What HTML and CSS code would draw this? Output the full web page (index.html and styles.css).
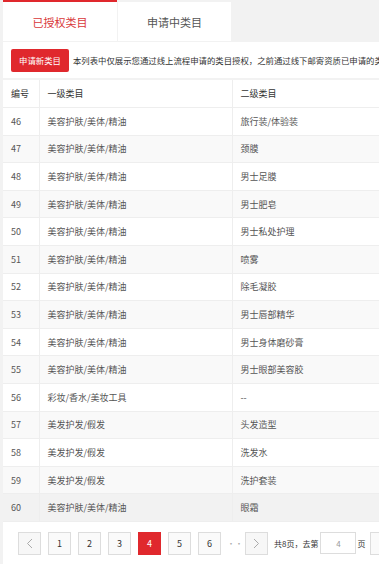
FILE: index.html
```html
<!DOCTYPE html>
<html lang="zh-CN">

<head>
  <meta charset="UTF-8">
  <meta name="viewport" content="width=device-width, initial-scale=1.0">
  <title>类目授权</title>
  <link rel="stylesheet" href="styles.css">
</head>

<body>
  <div class="page">
    <div class="tabs">
      <div class="tab active">已授权类目</div>
      <div class="tab">申请中类目</div>
    </div>

    <div class="notice">
      <button class="apply-btn">申请新类目</button>
      <span class="notice-text">本列表中仅展示您通过线上流程申请的类目授权，之前通过线下邮寄资质已申请的类目请联系客服查询</span>
    </div>

    <table class="cat-table">
      <thead>
        <tr>
          <th class="col-no">编号</th>
          <th class="col-first">一级类目</th>
          <th>二级类目</th>
        </tr>
      </thead>
      <tbody>
        <tr><td>46</td><td>美容护肤/美体/精油</td><td>旅行装/体验装</td></tr>
        <tr><td>47</td><td>美容护肤/美体/精油</td><td>颈膜</td></tr>
        <tr><td>48</td><td>美容护肤/美体/精油</td><td>男士足膜</td></tr>
        <tr><td>49</td><td>美容护肤/美体/精油</td><td>男士肥皂</td></tr>
        <tr><td>50</td><td>美容护肤/美体/精油</td><td>男士私处护理</td></tr>
        <tr><td>51</td><td>美容护肤/美体/精油</td><td>喷雾</td></tr>
        <tr><td>52</td><td>美容护肤/美体/精油</td><td>除毛凝胶</td></tr>
        <tr><td>53</td><td>美容护肤/美体/精油</td><td>男士唇部精华</td></tr>
        <tr><td>54</td><td>美容护肤/美体/精油</td><td>男士身体磨砂膏</td></tr>
        <tr><td>55</td><td>美容护肤/美体/精油</td><td>男士眼部美容胶</td></tr>
        <tr><td>56</td><td>彩妆/香水/美妆工具</td><td>--</td></tr>
        <tr><td>57</td><td>美发护发/假发</td><td>头发造型</td></tr>
        <tr><td>58</td><td>美发护发/假发</td><td>洗发水</td></tr>
        <tr><td>59</td><td>美发护发/假发</td><td>洗护套装</td></tr>
        <tr class="hover"><td>60</td><td>美容护肤/美体/精油</td><td>眼霜</td></tr>
      </tbody>
    </table>

    <div class="pager">
      <a class="pg arrow">
        <svg width="7" height="11" viewBox="0 0 7 11"><path d="M6 1L1.5 5.5L6 10" fill="none" stroke="#aaa" stroke-width="1"/></svg>
      </a>
      <a class="pg">1</a>
      <a class="pg">2</a>
      <a class="pg">3</a>
      <a class="pg current">4</a>
      <a class="pg">5</a>
      <a class="pg">6</a>
      <span class="dots">···</span>
      <a class="pg arrow">
        <svg width="7" height="11" viewBox="0 0 7 11"><path d="M1 1L5.5 5.5L1 10" fill="none" stroke="#aaa" stroke-width="1"/></svg>
      </a>
      <span class="jump">共8页，去第</span>
      <input class="jump-input" type="text" value="4">
      <span class="jump">页</span>
      <a class="pg go"></a>
    </div>
  </div>
</body>

</html>
```

FILE: styles.css
```css
body {
  margin: 0;
  background-color: #f2f2f2;
  font-family: "Noto Sans CJK SC", "Noto Sans", sans-serif;
  color: #333;
}

.page {
  width: 379px;
  height: 564px;
  padding-left: 3px;
  box-sizing: border-box;
  overflow: hidden;
}

.tabs {
  display: flex;
  height: 41px;
}

.tab {
  background-color: #fff;
  color: #555;
  font-size: 11px;
  display: flex;
  align-items: center;
  justify-content: center;
  width: 113px;
  margin-top: 2px;
  margin-left: 1px;
}

.tab.active {
  width: 114px;
  margin-top: 0;
  margin-left: 0;
  border-top: 2px solid #e0282d;
  color: #d9383a;
}

.notice {
  display: flex;
  align-items: center;
  margin-top: 1px;
  height: 36px;
  width: 420px;
  padding-left: 8px;
  background-color: #fff;
}

.apply-btn {
  flex: none;
  width: 58px;
  height: 23px;
  padding: 0;
  border: none;
  border-radius: 2px;
  background-color: #e0282d;
  color: #fff;
  font-family: inherit;
  font-size: 8.4px;
}

.notice-text {
  margin-left: 4px;
  font-size: 8.4px;
  color: #333;
  white-space: nowrap;
}

.cat-table {
  margin-top: 2px;
  width: 430px;
  border-collapse: collapse;
  background-color: #fff;
  table-layout: fixed;
  font-size: 9px;
}

.cat-table th,
.cat-table td {
  height: 27.6px;
  padding: 0 0 0 8px;
  text-align: left;
  border-bottom: 1px solid #eee;
  border-right: 1px solid #eee;
  white-space: nowrap;
  box-sizing: border-box;
}

.cat-table th {
  font-weight: normal;
  color: #333;
}

.cat-table td {
  color: #555;
}

.cat-table .col-no {
  width: 36px;
}

.cat-table .col-first {
  width: 193px;
}

.cat-table tbody tr:nth-child(even) {
  background-color: #f9f9f9;
}

.cat-table tbody tr.hover {
  background-color: #f2f2f2;
}

.pager {
  display: flex;
  align-items: center;
  gap: 7px;
  height: 42px;
  width: 420px;
  padding-left: 15px;
  background-color: #fff;
  font-size: 9px;
}

.pg {
  flex: none;
  width: 23px;
  height: 23px;
  box-sizing: border-box;
  border: 1px solid #ddd;
  background-color: #fafafa;
  display: flex;
  align-items: center;
  justify-content: center;
  color: #333;
}

.pg.arrow {
  background-color: #f7f7f7;
}

.pg.current {
  background-color: #e0282d;
  border-color: #e0282d;
  color: #fff;
}

.dots {
  flex: none;
  width: 11px;
  margin-left: -1px;
  font-size: 8px;
  color: #aaa;
}

.jump {
  flex: none;
  margin-left: -1px;
  font-size: 8px;
  color: #333;
}

.jump-input {
  flex: none;
  width: 36px;
  height: 22px;
  box-sizing: border-box;
  margin: 0 -5px 0 -5px;
  border: 1px solid #ddd;
  text-align: center;
  font-size: 8px;
  color: #999;
  font-family: inherit;
}

.pg.go {
  width: 30px;
  margin-left: -2px;
}
```
